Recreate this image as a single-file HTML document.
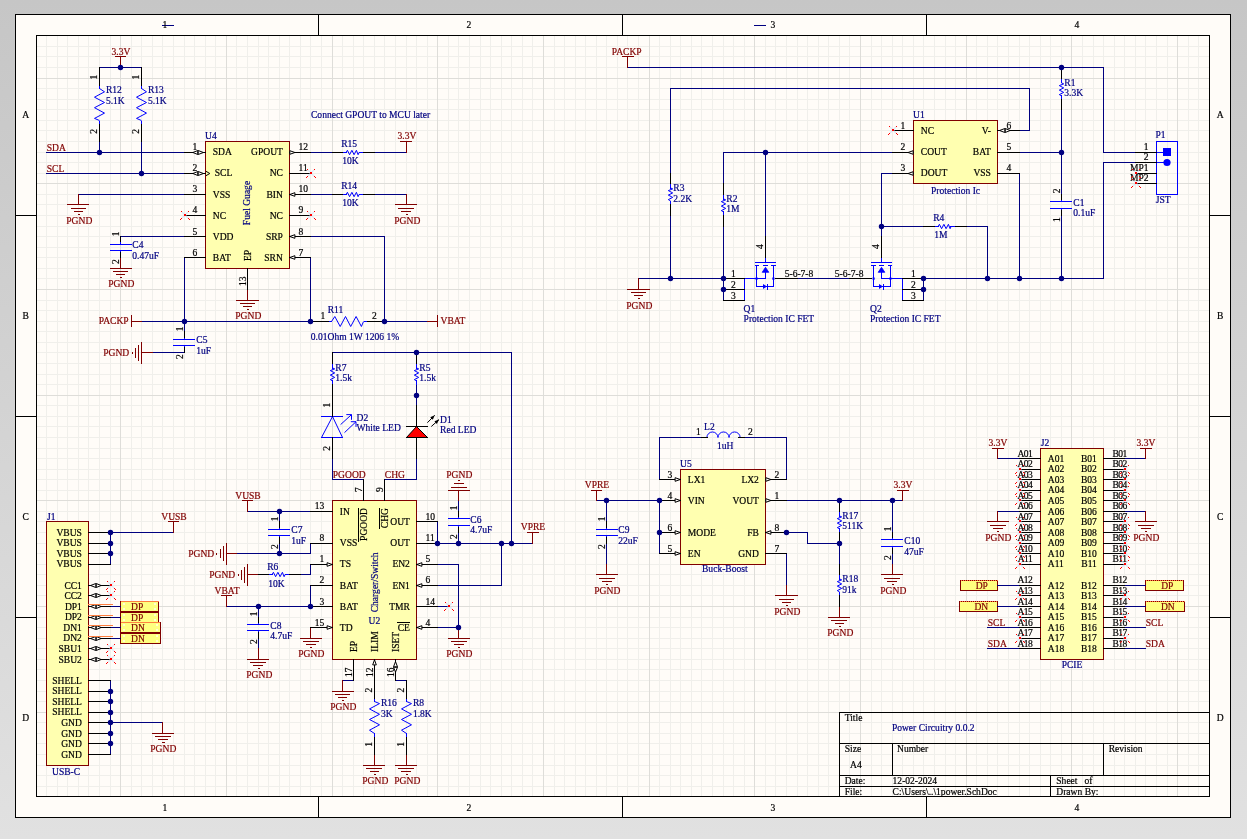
<!DOCTYPE html><html><head><meta charset="utf-8"><title>Power Circuitry 0.0.2</title><style>html,body{margin:0;padding:0;background:#d3d3d3;overflow:hidden}body{width:1247px;height:839px}svg{display:block;will-change:transform}text{font-family:"Liberation Serif",serif;font-size:9.56px;stroke-width:0.2px;paint-order:stroke}</style></head><body>
<svg width="1247" height="839" viewBox="0 0 1247 839">
<defs><linearGradient id="bg" x1="0" y1="0" x2="0" y2="1"><stop offset="0" stop-color="#C6C6C6"/><stop offset="1" stop-color="#E1E1E1"/></linearGradient></defs>
<rect width="1247" height="839" fill="url(#bg)"/>
<rect x="15" y="14" width="1216" height="804" fill="#FFFCF8"/>
<g shape-rendering="crispEdges" fill="none" stroke-width="1"><path stroke="#F0EFEB" d="M46.5 36V796M57.5 36V796M67.5 36V796M78.5 36V796M88.5 36V796M99.5 36V796M110.5 36V796M131.5 36V796M141.5 36V796M152.5 36V796M162.5 36V796M173.5 36V796M184.5 36V796M194.5 36V796M205.5 36V796M215.5 36V796M236.5 36V796M247.5 36V796M258.5 36V796M268.5 36V796M279.5 36V796M289.5 36V796M300.5 36V796M310.5 36V796M321.5 36V796M342.5 36V796M353.5 36V796M363.5 36V796M374.5 36V796M384.5 36V796M395.5 36V796M406.5 36V796M416.5 36V796M427.5 36V796M448.5 36V796M458.5 36V796M469.5 36V796M480.5 36V796M490.5 36V796M501.5 36V796M511.5 36V796M522.5 36V796M532.5 36V796M554.5 36V796M564.5 36V796M575.5 36V796M585.5 36V796M596.5 36V796M606.5 36V796M617.5 36V796M627.5 36V796M638.5 36V796M659.5 36V796M670.5 36V796M680.5 36V796M691.5 36V796M701.5 36V796M712.5 36V796M723.5 36V796M733.5 36V796M744.5 36V796M765.5 36V796M775.5 36V796M786.5 36V796M797.5 36V796M807.5 36V796M818.5 36V796M828.5 36V796M839.5 36V796M849.5 36V796M871.5 36V796M881.5 36V796M892.5 36V796M902.5 36V796M913.5 36V796M923.5 36V796M934.5 36V796M945.5 36V796M955.5 36V796M976.5 36V796M987.5 36V796M997.5 36V796M1008.5 36V796M1019.5 36V796M1029.5 36V796M1040.5 36V796M1050.5 36V796M1061.5 36V796M1082.5 36V796M1093.5 36V796M1103.5 36V796M1114.5 36V796M1124.5 36V796M1135.5 36V796M1145.5 36V796M1156.5 36V796M1167.5 36V796M1188.5 36V796M1198.5 36V796M37 46.5H1209M37 56.5H1209M37 67.5H1209M37 88.5H1209M37 99.5H1209M37 109.5H1209M37 120.5H1209M37 130.5H1209M37 141.5H1209M37 152.5H1209M37 162.5H1209M37 173.5H1209M37 194.5H1209M37 204.5H1209M37 215.5H1209M37 226.5H1209M37 236.5H1209M37 247.5H1209M37 257.5H1209M37 268.5H1209M37 278.5H1209M37 300.5H1209M37 310.5H1209M37 321.5H1209M37 331.5H1209M37 342.5H1209M37 352.5H1209M37 363.5H1209M37 374.5H1209M37 384.5H1209M37 405.5H1209M37 416.5H1209M37 426.5H1209M37 437.5H1209M37 448.5H1209M37 458.5H1209M37 469.5H1209M37 479.5H1209M37 490.5H1209M37 511.5H1209M37 521.5H1209M37 532.5H1209M37 543.5H1209M37 553.5H1209M37 564.5H1209M37 574.5H1209M37 585.5H1209M37 595.5H1209M37 617.5H1209M37 627.5H1209M37 638.5H1209M37 648.5H1209M37 659.5H1209M37 669.5H1209M37 680.5H1209M37 691.5H1209M37 701.5H1209M37 722.5H1209M37 733.5H1209M37 743.5H1209M37 754.5H1209M37 765.5H1209M37 775.5H1209M37 786.5H1209"/><path stroke="#DEDDD9" d="M120.5 36V796M226.5 36V796M332.5 36V796M437.5 36V796M543.5 36V796M649.5 36V796M754.5 36V796M860.5 36V796M966.5 36V796M1071.5 36V796M1177.5 36V796M37 78.5H1209M37 183.5H1209M37 289.5H1209M37 395.5H1209M37 500.5H1209M37 606.5H1209M37 712.5H1209"/></g>
<path shape-rendering="crispEdges" fill="none" stroke="#000" stroke-width="1" d="M15.5 14.5H1230.5V817.5H15.5ZM36.5 35.5H1209.5V796.5H36.5ZM318.5 14.5V35.5M318.5 796.5V817.5M622.5 14.5V35.5M622.5 796.5V817.5M926.5 14.5V35.5M926.5 796.5V817.5M15.5 215.5H36.5M1209.5 215.5H1230.5M15.5 416.5H36.5M1209.5 416.5H1230.5M15.5 617.5H36.5M1209.5 617.5H1230.5M839.5 796.5V712.5H1209.5M839.5 743.5H1209.5M839.5 775.5H1209.5M839.5 786.5H1209.5M892.5 743.5V775.5M1103.5 743.5V775.5M1050.5 775.5V796.5"/>
<g fill="#FFFFB0" stroke="#800000" stroke-width="1" shape-rendering="crispEdges"><rect x="205.5" y="141.5" width="84" height="127"/><rect x="332.5" y="500.5" width="84" height="159"/><rect x="46.5" y="521.5" width="42" height="244"/><rect x="913.5" y="120.5" width="84" height="63"/><rect x="680.5" y="469.5" width="85" height="95"/><rect x="1040.5" y="448.5" width="63" height="211"/></g>
<g fill="#FFFF80" stroke="#800000" stroke-width="1" shape-rendering="crispEdges"><rect x="120.5" y="601.5" width="38" height="10"/><rect x="120.5" y="612.5" width="38" height="10"/><rect x="120.5" y="622.5" width="39.5" height="10"/><rect x="120.5" y="633.5" width="39.5" height="10"/><rect x="960.5" y="580.5" width="37" height="10"/><rect x="959.5" y="601.5" width="38" height="10"/><rect x="1145.5" y="580.5" width="38" height="10"/><rect x="1145.5" y="601.5" width="39" height="10"/></g>
<g fill="none" stroke="#FFFFD0" stroke-width="1.5" shape-rendering="crispEdges"><path d="M123 604h2M123 609h2M154 604h2M154 609h2"/><path d="M123 615h2M123 620h2M154 615h2M154 620h2"/><path d="M123 625h2M123 630h2M155.5 625h2M155.5 630h2"/><path d="M123 636h2M123 641h2M155.5 636h2M155.5 641h2"/></g>
<g fill="none" stroke="#0000FF" stroke-width="1" shape-rendering="crispEdges"><rect x="1156.5" y="141.5" width="21" height="53"/></g>
<path shape-rendering="crispEdges" stroke-linecap="square" fill="none" stroke="#000080" stroke-width="1" d="M99.5 67.5 L141.5 67.5M99.5 141.5 L99.5 152.5M141.5 141.5 L141.5 173.5M46.5 152.5 L184.5 152.5M46.5 173.5 L184.5 173.5M78.5 194.5 L184.5 194.5M120.5 236.5 L184.5 236.5M184.5 257.5 L184.5 321.5M141.5 321.5 L310.5 321.5M310.5 257.5 L310.5 321.5M310.5 236.5 L384.5 236.5 L384.5 321.5M384.5 321.5 L427.5 321.5M184.5 321.5 L184.5 331.5M184.5 352.5 L152.5 352.5M310.5 152.5 L332.5 152.5M374.5 152.5 L406.5 152.5M310.5 194.5 L332.5 194.5M374.5 194.5 L406.5 194.5M332.5 352.5 L511.5 352.5 L511.5 543.5M416.5 395.5 L416.5 384.5M416.5 395.5 L416.5 405.5M332.5 458.5 L332.5 479.5 L363.5 479.5M416.5 458.5 L416.5 479.5 L384.5 479.5M247.5 511.5 L310.5 511.5M279.5 511.5 L279.5 521.5M279.5 543.5 L279.5 553.5M236.5 553.5 L310.5 553.5 L310.5 543.5M310.5 564.5 L310.5 574.5 L300.5 574.5M310.5 585.5 L310.5 606.5M226.5 606.5 L310.5 606.5M258.5 606.5 L258.5 617.5M258.5 638.5 L258.5 648.5M437.5 521.5 L437.5 543.5M437.5 543.5 L532.5 543.5M458.5 500.5 L458.5 511.5M458.5 532.5 L458.5 543.5M437.5 564.5 L458.5 564.5 L458.5 627.5M437.5 585.5 L501.5 585.5 L501.5 543.5M437.5 606.5 L448.5 606.5M437.5 627.5 L458.5 627.5M353.5 680.5 L342.5 680.5M395.5 680.5 L406.5 680.5M110.5 532.5 L110.5 564.5M110.5 532.5 L173.5 532.5M110.5 606.5 L120.5 606.5M110.5 617.5 L120.5 617.5M110.5 627.5 L120.5 627.5M110.5 638.5 L120.5 638.5M110.5 680.5 L110.5 754.5M110.5 722.5 L162.5 722.5M627.5 67.5 L1103.5 67.5 L1103.5 152.5 L1135.5 152.5M1061.5 109.5 L1061.5 194.5M1061.5 215.5 L1061.5 278.5M723.5 152.5 L892.5 152.5M765.5 152.5 L765.5 236.5M892.5 173.5 L881.5 173.5 L881.5 236.5M881.5 226.5 L923.5 226.5M966.5 226.5 L987.5 226.5 L987.5 278.5M1019.5 130.5 L1029.5 130.5 L1029.5 88.5 L670.5 88.5 L670.5 173.5M670.5 215.5 L670.5 278.5M723.5 152.5 L723.5 183.5M723.5 226.5 L723.5 300.5M1019.5 152.5 L1061.5 152.5M1019.5 173.5 L1019.5 278.5M638.5 278.5 L723.5 278.5M923.5 278.5 L1103.5 278.5 L1103.5 162.5 L1135.5 162.5M923.5 278.5 L923.5 300.5M797.5 278.5 L849.5 278.5M659.5 479.5 L659.5 437.5 L701.5 437.5M744.5 437.5 L786.5 437.5 L786.5 479.5M596.5 500.5 L659.5 500.5M659.5 500.5 L659.5 553.5M606.5 500.5 L606.5 521.5M606.5 543.5 L606.5 564.5M786.5 500.5 L902.5 500.5M839.5 543.5 L839.5 564.5M786.5 532.5 L807.5 532.5 L807.5 543.5 L839.5 543.5M786.5 553.5 L786.5 585.5M892.5 500.5 L892.5 532.5M892.5 553.5 L892.5 564.5M997.5 458.5 L1019.5 458.5M1124.5 458.5 L1145.5 458.5M997.5 511.5 L1019.5 511.5M1124.5 511.5 L1145.5 511.5M997.5 585.5 L1019.5 585.5M997.5 606.5 L1019.5 606.5M1124.5 585.5 L1145.5 585.5M1124.5 606.5 L1145.5 606.5M987.5 627.5 L1019.5 627.5M987.5 648.5 L1019.5 648.5M1124.5 627.5 L1145.5 627.5M1124.5 648.5 L1145.5 648.5M162.5 25.5 L173.5 25.5M754.5 25.5 L765.5 25.5"/>
<path shape-rendering="crispEdges" stroke-linecap="square" fill="none" stroke="#0000FF" stroke-width="1" d="M99.5 85.5 L99.5 88.5M99.5 121 L99.5 123.5M141.5 85.5 L141.5 88.5M141.5 121 L141.5 123.5M120.5 242.5 L120.5 244.5M120.5 250.5 L120.5 251.5M110.5 244.5 L131.5 244.5M110.5 250.5 L131.5 250.5M328.5 321.5 L331.5 321.5M364 321.5 L366.5 321.5M184.5 338.5 L184.5 339.5M184.5 345.5 L184.5 346.5M173.5 339.5 L194.5 339.5M173.5 345.5 L194.5 345.5M342.5 152.5 L346.5 152.5M359.5 152.5 L363.5 152.5M342.5 194.5 L346.5 194.5M359.5 194.5 L363.5 194.5M332.5 384.5 L332.5 380.5M332.5 368.5 L332.5 363.5M416.5 384.5 L416.5 380.5M416.5 368.5 L416.5 363.5M321.5 416.5 L342.5 416.5M321.5 437.5 L342.5 437.5M279.5 528.5 L279.5 529.5M279.5 535.5 L279.5 536.5M268.5 529.5 L289.5 529.5M268.5 535.5 L289.5 535.5M268.5 574.5 L272.5 574.5M285.5 574.5 L289.5 574.5M258.5 623.5 L258.5 624.5M258.5 630.5 L258.5 631.5M247.5 624.5 L268.5 624.5M247.5 630.5 L268.5 630.5M458.5 517.5 L458.5 518.5M458.5 525.5 L458.5 526.5M448.5 518.5 L469.5 518.5M448.5 525.5 L469.5 525.5M374.5 736.5 L374.5 733.5M374.5 701 L374.5 698.5M406.5 736.5 L406.5 733.5M406.5 701 L406.5 698.5M1061.5 99.5 L1061.5 95.5M1061.5 82.5 L1061.5 78.5M1061.5 200.5 L1061.5 201.5M1061.5 208.5 L1061.5 209.5M1050.5 201.5 L1071.5 201.5M1050.5 208.5 L1071.5 208.5M934.5 226.5 L938.5 226.5M950.5 226.5 L955.5 226.5M670.5 204.5 L670.5 201.5M670.5 188.5 L670.5 183.5M723.5 215.5 L723.5 211.5M723.5 199.5 L723.5 194.5M744.5 278.5 L744.5 300.5M765.5 257.5 L765.5 262.5M755.5 262.5 L775.5 262.5M755.5 265.5 L758.5 265.5M763.5 265.5 L767.5 265.5M771.5 265.5 L775.5 265.5M756.5 265.5 L756.5 286.5 L773.5 286.5 L773.5 265.5M744.5 278.5 L765.5 278.5 L765.5 269.5M767.5 284 L767.5 289M902.5 278.5 L902.5 300.5M881.5 257.5 L881.5 262.5M871.5 262.5 L891.5 262.5M871.5 265.5 L875.5 265.5M879.5 265.5 L883.5 265.5M888.5 265.5 L891.5 265.5M873.5 265.5 L873.5 286.5 L890.5 286.5 L890.5 265.5M902.5 278.5 L881.5 278.5 L881.5 269.5M883.5 284 L883.5 289M1156.5 152.5 L1164.5 152.5M1156.5 162.5 L1164.5 162.5M606.5 528.5 L606.5 529.5M606.5 535.5 L606.5 536.5M596.5 529.5 L617.5 529.5M596.5 535.5 L617.5 535.5M839.5 532.5 L839.5 528.5M839.5 516.5 L839.5 511.5M839.5 595.5 L839.5 592.5M839.5 579.5 L839.5 574.5M892.5 538.5 L892.5 539.5M892.5 546.5 L892.5 547.5M881.5 539.5 L902.5 539.5M881.5 546.5 L902.5 546.5"/>
<path fill="none" stroke="#0000FF" stroke-width="1" d="M99.5 88.5 L104.5 91.8 L94.5 97.2 L104.5 102.5 L94.5 107.7 L104.5 113.1 L94.5 118.4 L99.5 120.5M141.5 88.5 L146.5 91.8 L136.5 97.2 L146.5 102.5 L136.5 107.7 L146.5 113.1 L136.5 118.4 L141.5 120.5M331.5 321.5 L334.8 316.5 L340.2 326.5 L345.5 316.5 L350.7 326.5 L356.1 316.5 L361.4 326.5 L363.5 321.5M346.1 152.5 L347.4 150.3 L349.6 154.7 L351.9 150.3 L354.1 154.7 L356.4 150.3 L358.1 154.7 L359.1 152.5M346.1 194.5 L347.4 192.3 L349.6 196.7 L351.9 192.3 L354.1 196.7 L356.4 192.3 L358.1 196.7 L359.1 194.5M332.5 380.9 L330.3 379.6 L334.7 377.4 L330.3 375.1 L334.7 372.9 L330.3 370.6 L334.7 368.9 L332.5 367.9M416.5 380.9 L414.3 379.6 L418.7 377.4 L414.3 375.1 L418.7 372.9 L414.3 370.6 L418.7 368.9 L416.5 367.9M332.5 416.5 L342.5 437.5 L321.5 437.5 L332.5 416.5M340.6 424.6 L351.5 414.6M346.3 414.6 L351.5 414.6 L351.5 419.8M344.5 432.6 L356 421.7M350.8 421.7 L356 421.7 L356 426.9M272.1 574.5 L273.4 572.3 L275.6 576.7 L277.9 572.3 L280.1 576.7 L282.4 572.3 L284.1 576.7 L285.1 574.5M374.5 733.5 L369.5 730.2 L379.5 724.8 L369.5 719.5 L379.5 714.3 L369.5 708.9 L379.5 703.6 L374.5 701.5M406.5 733.5 L401.5 730.2 L411.5 724.8 L401.5 719.5 L411.5 714.3 L401.5 708.9 L411.5 703.6 L406.5 701.5M1061.5 95.9 L1059.3 94.6 L1063.7 92.4 L1059.3 90.1 L1063.7 87.9 L1059.3 85.6 L1063.7 83.9 L1061.5 82.9M938.1 226.5 L939.4 224.3 L941.6 228.7 L943.9 224.3 L946.1 228.7 L948.4 224.3 L950.1 228.7 L951.1 226.5M670.5 200.9 L668.3 199.6 L672.7 197.4 L668.3 195.1 L672.7 192.9 L668.3 190.6 L672.7 188.9 L670.5 187.9M723.5 211.9 L721.3 210.6 L725.7 208.4 L721.3 206.1 L725.7 203.9 L721.3 201.6 L725.7 199.9 L723.5 198.9M706.9 437.5 a5.53 5.53 0 0 1 11.07 0 a5.53 5.53 0 0 1 11.07 0 a5.53 5.53 0 0 1 11.07 0M839.5 528.9 L837.3 527.6 L841.7 525.4 L837.3 523.1 L841.7 520.9 L837.3 518.6 L841.7 516.9 L839.5 515.9M839.5 591.9 L837.3 590.6 L841.7 588.4 L837.3 586.1 L841.7 583.9 L837.3 581.6 L841.7 579.9 L839.5 578.9"/>
<path fill="none" stroke="#000000" stroke-width="1" d="M427.4 422.7 L434.7 415.3M431.3 426.5 L439 419.6"/>
<g fill="#FF0000" stroke="#000" stroke-width="1"><polygon points="416.5,426.5 427.5,437.5 406.5,437.5"/></g>
<g fill="#000"><polygon points="434.7,415.3 432.82,419.77 430.26,417.24"/><polygon points="439,419.6 436.85,423.94 434.45,421.26"/></g>
<g fill="#0000FF"><polygon points="765.5,267.3 768.8,272.3 762.2,272.3" stroke="#0000FF" stroke-width="0.8"/><rect x="755.5" y="277.5" width="2.2" height="2.2"/><rect x="772.3" y="277.5" width="2.2" height="2.2"/><polygon points="763,284 767,286.5 763,289" /><polygon points="881.5,267.3 884.8,272.3 878.2,272.3" stroke="#0000FF" stroke-width="0.8"/><rect x="872.5" y="277.5" width="2.2" height="2.2"/><rect x="889.3" y="277.5" width="2.2" height="2.2"/><polygon points="879,284 883,286.5 879,289" /><rect x="1163" y="148" width="8" height="8" shape-rendering="crispEdges"/><circle cx="1167" cy="162.5" r="3.6"/></g>
<path shape-rendering="crispEdges" stroke-linecap="square" fill="none" stroke="#800000" stroke-width="1" d="M120.5 67.5 L120.5 56.5M115.5 56.5 L125.5 56.5M247.5 289.5 L247.5 300.5M236.5 300.5 L258.5 300.5M240.5 303.5 L254.5 303.5M243.5 306.5 L251.5 306.5M247.5 309.5 L248.5 309.5M78.5 194.5 L78.5 204.5M67.5 204.5 L88.5 204.5M71.5 208.5 L85.5 208.5M74.5 211.5 L82.5 211.5M78.5 214.5 L79.5 214.5M120.5 257.5 L120.5 268.5M110.5 268.5 L131.5 268.5M113.5 271.5 L127.5 271.5M116.5 274.5 L124.5 274.5M120.5 277.5 L121.5 277.5M141.5 321.5 L131.5 321.5M131.5 315.5 L131.5 326.5M427.5 321.5 L437.5 321.5M437.5 315.5 L437.5 326.5M152.5 352.5 L141.5 352.5M141.5 342.5 L141.5 363.5M138.5 345.5 L138.5 360.5M135.5 348.5 L135.5 357.5M132.5 352.5 L132.5 353.5M406.5 152.5 L406.5 141.5M400.5 141.5 L411.5 141.5M406.5 194.5 L406.5 204.5M395.5 204.5 L416.5 204.5M398.5 208.5 L413.5 208.5M401.5 211.5 L410.5 211.5M406.5 214.5 L407.5 214.5M247.5 511.5 L247.5 500.5M242.5 500.5 L252.5 500.5M236.5 553.5 L226.5 553.5M226.5 543.5 L226.5 564.5M223.5 546.5 L223.5 560.5M220.5 549.5 L220.5 557.5M216.5 553.5 L216.5 554.5M258.5 574.5 L247.5 574.5M247.5 564.5 L247.5 585.5M244.5 567.5 L244.5 582.5M241.5 570.5 L241.5 579.5M238.5 574.5 L238.5 575.5M226.5 606.5 L226.5 595.5M221.5 595.5 L231.5 595.5M258.5 648.5 L258.5 659.5M247.5 659.5 L268.5 659.5M250.5 662.5 L265.5 662.5M253.5 665.5 L262.5 665.5M258.5 668.5 L259.5 668.5M310.5 627.5 L310.5 638.5M300.5 638.5 L321.5 638.5M303.5 641.5 L318.5 641.5M306.5 644.5 L315.5 644.5M310.5 647.5 L311.5 647.5M532.5 543.5 L532.5 532.5M527.5 532.5 L538.5 532.5M458.5 500.5 L458.5 490.5M448.5 490.5 L469.5 490.5M451.5 487.5 L466.5 487.5M454.5 483.5 L463.5 483.5M458.5 480.5 L459.5 480.5M458.5 627.5 L458.5 638.5M448.5 638.5 L469.5 638.5M451.5 641.5 L466.5 641.5M454.5 644.5 L463.5 644.5M458.5 647.5 L459.5 647.5M342.5 680.5 L342.5 691.5M332.5 691.5 L353.5 691.5M335.5 694.5 L349.5 694.5M338.5 697.5 L346.5 697.5M342.5 700.5 L343.5 700.5M374.5 754.5 L374.5 765.5M363.5 765.5 L384.5 765.5M366.5 768.5 L381.5 768.5M370.5 771.5 L378.5 771.5M374.5 774.5 L375.5 774.5M406.5 754.5 L406.5 765.5M395.5 765.5 L416.5 765.5M398.5 768.5 L413.5 768.5M401.5 771.5 L410.5 771.5M406.5 774.5 L407.5 774.5M173.5 532.5 L173.5 521.5M168.5 521.5 L178.5 521.5M162.5 722.5 L162.5 733.5M152.5 733.5 L173.5 733.5M155.5 736.5 L170.5 736.5M158.5 739.5 L167.5 739.5M162.5 742.5 L164.5 742.5M627.5 67.5 L627.5 56.5M622.5 56.5 L633.5 56.5M638.5 278.5 L638.5 289.5M627.5 289.5 L649.5 289.5M631.5 292.5 L645.5 292.5M634.5 295.5 L642.5 295.5M638.5 298.5 L639.5 298.5M596.5 500.5 L596.5 490.5M591.5 490.5 L601.5 490.5M606.5 564.5 L606.5 574.5M596.5 574.5 L617.5 574.5M599.5 578.5 L614.5 578.5M602.5 581.5 L611.5 581.5M606.5 584.5 L607.5 584.5M902.5 500.5 L902.5 490.5M897.5 490.5 L908.5 490.5M839.5 606.5 L839.5 617.5M828.5 617.5 L849.5 617.5M831.5 620.5 L846.5 620.5M835.5 623.5 L843.5 623.5M839.5 626.5 L840.5 626.5M786.5 585.5 L786.5 595.5M775.5 595.5 L797.5 595.5M779.5 599.5 L793.5 599.5M782.5 602.5 L790.5 602.5M786.5 605.5 L787.5 605.5M892.5 564.5 L892.5 574.5M881.5 574.5 L902.5 574.5M884.5 578.5 L899.5 578.5M887.5 581.5 L896.5 581.5M892.5 584.5 L893.5 584.5M997.5 458.5 L997.5 448.5M992.5 448.5 L1003.5 448.5M1145.5 458.5 L1145.5 448.5M1140.5 448.5 L1151.5 448.5M997.5 511.5 L997.5 521.5M987.5 521.5 L1008.5 521.5M990.5 525.5 L1005.5 525.5M993.5 528.5 L1002.5 528.5M997.5 531.5 L998.5 531.5M1145.5 511.5 L1145.5 521.5M1135.5 521.5 L1156.5 521.5M1138.5 525.5 L1153.5 525.5M1141.5 528.5 L1150.5 528.5M1145.5 531.5 L1146.5 531.5"/>
<path shape-rendering="crispEdges" stroke-linecap="square" fill="none" stroke="#000000" stroke-width="1" d="M99.5 67.5 L99.5 85M99.5 124 L99.5 141.5M141.5 67.5 L141.5 85M141.5 124 L141.5 141.5M184.5 152.5 L205.5 152.5M184.5 173.5 L205.5 173.5M184.5 194.5 L205.5 194.5M184.5 215.5 L205.5 215.5M184.5 236.5 L205.5 236.5M184.5 257.5 L205.5 257.5M289.5 152.5 L310.5 152.5M289.5 173.5 L310.5 173.5M289.5 194.5 L310.5 194.5M289.5 215.5 L310.5 215.5M289.5 236.5 L310.5 236.5M289.5 257.5 L310.5 257.5M247.5 268.5 L247.5 289.5M120.5 236.5 L120.5 241.5M120.5 252.5 L120.5 257.5M310.5 321.5 L328 321.5M367 321.5 L384.5 321.5M184.5 331.5 L184.5 337.5M184.5 347.5 L184.5 352.5M332.5 152.5 L342.5 152.5M363.5 152.5 L374.5 152.5M332.5 194.5 L342.5 194.5M363.5 194.5 L374.5 194.5M332.5 395.5 L332.5 384.5M332.5 363.5 L332.5 352.5M416.5 363.5 L416.5 352.5M332.5 395.5 L332.5 416.5M332.5 437.5 L332.5 458.5M416.5 405.5 L416.5 426.5M416.5 437.5 L416.5 458.5M406.5 426.5 L427.5 426.5M406.5 437.5 L427.5 437.5M310.5 511.5 L332.5 511.5M310.5 543.5 L332.5 543.5M310.5 564.5 L332.5 564.5M310.5 585.5 L332.5 585.5M310.5 606.5 L332.5 606.5M310.5 627.5 L332.5 627.5M416.5 521.5 L437.5 521.5M416.5 543.5 L437.5 543.5M416.5 564.5 L437.5 564.5M416.5 585.5 L437.5 585.5M416.5 606.5 L437.5 606.5M416.5 627.5 L437.5 627.5M363.5 479.5 L363.5 500.5M384.5 479.5 L384.5 500.5M353.5 659.5 L353.5 680.5M374.5 659.5 L374.5 680.5M395.5 659.5 L395.5 680.5M358.7 508 L358.7 541M379.7 508 L379.7 528M397 622.2 L409.5 622.2M279.5 521.5 L279.5 527.5M279.5 537.5 L279.5 543.5M258.5 574.5 L268.5 574.5M289.5 574.5 L300.5 574.5M258.5 617.5 L258.5 622.5M258.5 632.5 L258.5 638.5M458.5 511.5 L458.5 516.5M458.5 527.5 L458.5 532.5M374.5 754.5 L374.5 737M374.5 698 L374.5 680.5M406.5 754.5 L406.5 737M406.5 698 L406.5 680.5M88.5 532.5 L110.5 532.5M88.5 543.5 L110.5 543.5M88.5 553.5 L110.5 553.5M88.5 564.5 L110.5 564.5M88.5 585.5 L110.5 585.5M88.5 595.5 L110.5 595.5M88.5 606.5 L110.5 606.5M88.5 617.5 L110.5 617.5M88.5 627.5 L110.5 627.5M88.5 638.5 L110.5 638.5M88.5 648.5 L110.5 648.5M88.5 659.5 L110.5 659.5M88.5 680.5 L110.5 680.5M88.5 691.5 L110.5 691.5M88.5 701.5 L110.5 701.5M88.5 712.5 L110.5 712.5M88.5 722.5 L110.5 722.5M88.5 733.5 L110.5 733.5M88.5 743.5 L110.5 743.5M88.5 754.5 L110.5 754.5M1061.5 109.5 L1061.5 99.5M1061.5 78.5 L1061.5 67.5M1061.5 194.5 L1061.5 199.5M1061.5 210.5 L1061.5 215.5M892.5 130.5 L913.5 130.5M892.5 152.5 L913.5 152.5M892.5 173.5 L913.5 173.5M997.5 130.5 L1019.5 130.5M997.5 152.5 L1019.5 152.5M997.5 173.5 L1019.5 173.5M923.5 226.5 L934.5 226.5M955.5 226.5 L966.5 226.5M670.5 215.5 L670.5 204.5M670.5 183.5 L670.5 173.5M723.5 226.5 L723.5 215.5M723.5 194.5 L723.5 183.5M723.5 278.5 L744.5 278.5M723.5 289.5 L744.5 289.5M723.5 300.5 L744.5 300.5M765.5 236.5 L765.5 257.5M775.5 278.5 L797.5 278.5M923.5 278.5 L902.5 278.5M923.5 289.5 L902.5 289.5M923.5 300.5 L902.5 300.5M881.5 236.5 L881.5 257.5M871.5 278.5 L849.5 278.5M1135.5 152.5 L1156.5 152.5M1135.5 162.5 L1156.5 162.5M1135.5 173.5 L1156.5 173.5M1135.5 183.5 L1156.5 183.5M659.5 479.5 L680.5 479.5M659.5 500.5 L680.5 500.5M659.5 532.5 L680.5 532.5M659.5 553.5 L680.5 553.5M765.5 479.5 L786.5 479.5M765.5 500.5 L786.5 500.5M765.5 532.5 L786.5 532.5M765.5 553.5 L786.5 553.5M701.5 437.5 L707.5 437.5M738.5 437.5 L744.5 437.5M606.5 521.5 L606.5 527.5M606.5 537.5 L606.5 543.5M839.5 543.5 L839.5 532.5M839.5 511.5 L839.5 500.5M839.5 606.5 L839.5 595.5M839.5 574.5 L839.5 564.5M892.5 532.5 L892.5 537.5M892.5 548.5 L892.5 553.5M1019.5 458.5 L1040.5 458.5M1019.5 469.5 L1040.5 469.5M1019.5 479.5 L1040.5 479.5M1019.5 490.5 L1040.5 490.5M1019.5 500.5 L1040.5 500.5M1019.5 511.5 L1040.5 511.5M1019.5 521.5 L1040.5 521.5M1019.5 532.5 L1040.5 532.5M1019.5 543.5 L1040.5 543.5M1019.5 553.5 L1040.5 553.5M1019.5 564.5 L1040.5 564.5M1019.5 585.5 L1040.5 585.5M1019.5 595.5 L1040.5 595.5M1019.5 606.5 L1040.5 606.5M1019.5 617.5 L1040.5 617.5M1019.5 627.5 L1040.5 627.5M1019.5 638.5 L1040.5 638.5M1019.5 648.5 L1040.5 648.5M1103.5 458.5 L1124.5 458.5M1103.5 469.5 L1124.5 469.5M1103.5 479.5 L1124.5 479.5M1103.5 490.5 L1124.5 490.5M1103.5 500.5 L1124.5 500.5M1103.5 511.5 L1124.5 511.5M1103.5 521.5 L1124.5 521.5M1103.5 532.5 L1124.5 532.5M1103.5 543.5 L1124.5 543.5M1103.5 553.5 L1124.5 553.5M1103.5 564.5 L1124.5 564.5M1103.5 585.5 L1124.5 585.5M1103.5 595.5 L1124.5 595.5M1103.5 606.5 L1124.5 606.5M1103.5 617.5 L1124.5 617.5M1103.5 627.5 L1124.5 627.5M1103.5 638.5 L1124.5 638.5M1103.5 648.5 L1124.5 648.5"/>
<g fill="#FFFCF8" stroke="#000" stroke-width="1"><polygon points="192.9,152.5 197.8,150.5 197.8,154.5"/><polygon points="203.4,152.5 198.2,150.5 198.2,154.5"/><polygon points="192.9,173.5 197.8,171.5 197.8,175.5"/><polygon points="203.4,173.5 198.2,171.5 198.2,175.5"/><polygon points="294.9,152.5 289.8,154.3 289.8,150.7"/><polygon points="289.8,194.5 294.9,196.3 294.9,192.7"/><polygon points="289.8,236.5 294.9,238.3 294.9,234.7"/><polygon points="289.8,257.5 294.9,259.3 294.9,255.7"/><polygon points="332.2,564.5 327.1,562.7 327.1,566.3"/><polygon points="332.2,627.5 327.1,625.7 327.1,629.3"/><polygon points="416.8,564.5 421.9,566.3 421.9,562.7"/><polygon points="416.8,585.5 421.9,587.3 421.9,583.7"/><polygon points="416.8,627.5 421.9,629.3 421.9,625.7"/><polygon points="374.5,659.8 372.7,664.9 376.3,664.9"/><polygon points="395.5,672.1 393.5,667.2 397.5,667.2"/><polygon points="395.5,661.6 393.5,666.8 397.5,666.8"/><polygon points="101.1,585.5 96.2,587.5 96.2,583.5"/><polygon points="90.6,585.5 95.8,587.5 95.8,583.5"/><polygon points="101.1,595.5 96.2,597.5 96.2,593.5"/><polygon points="90.6,595.5 95.8,597.5 95.8,593.5"/><polygon points="101.1,606.5 96.2,608.5 96.2,604.5"/><polygon points="90.6,606.5 95.8,608.5 95.8,604.5"/><polygon points="101.1,617.5 96.2,619.5 96.2,615.5"/><polygon points="90.6,617.5 95.8,619.5 95.8,615.5"/><polygon points="101.1,627.5 96.2,629.5 96.2,625.5"/><polygon points="90.6,627.5 95.8,629.5 95.8,625.5"/><polygon points="101.1,638.5 96.2,640.5 96.2,636.5"/><polygon points="90.6,638.5 95.8,640.5 95.8,636.5"/><polygon points="101.1,648.5 96.2,650.5 96.2,646.5"/><polygon points="90.6,648.5 95.8,650.5 95.8,646.5"/><polygon points="101.1,659.5 96.2,661.5 96.2,657.5"/><polygon points="90.6,659.5 95.8,661.5 95.8,657.5"/><polygon points="908.1,152.5 913.2,150.7 913.2,154.3"/><polygon points="908.1,173.5 913.2,171.7 913.2,175.3"/><polygon points="1010.1,130.5 1005.2,132.5 1005.2,128.5"/><polygon points="999.6,130.5 1004.8,132.5 1004.8,128.5"/><polygon points="680.2,479.5 675.1,477.7 675.1,481.3"/><polygon points="680.2,500.5 675.1,498.7 675.1,502.3"/><polygon points="680.2,532.5 675.1,530.7 675.1,534.3"/><polygon points="680.2,553.5 675.1,551.7 675.1,555.3"/><polygon points="770.9,479.5 765.8,481.3 765.8,477.7"/><polygon points="770.9,500.5 765.8,502.3 765.8,498.7"/><polygon points="765.8,532.5 770.9,534.3 770.9,530.7"/></g>
<g fill="none" stroke="#000" stroke-width="1"><path d="M206 171.3l3.8 2.2l-3.8 2.2"/></g>
<g fill="none" stroke="#FF8040" stroke-width="1" shape-rendering="crispEdges"><path d="M120.5 601.2H158.5"/><path d="M87.5 604H112.5"/><path d="M87.5 615H112.5"/><path d="M120.5 622.2H160"/><path d="M87.5 625H112.5"/><path d="M87.5 636H112.5"/><path d="M960.5 580.2H997.5" stroke-dasharray="1 1"/><path d="M959.5 601.2H997.5" stroke-dasharray="1 1"/><path d="M1145.5 580.2H1183.5" stroke-dasharray="1 1"/><path d="M1145.5 601.2H1184.5" stroke-dasharray="1 1"/></g>
<g fill="#000080"><circle cx="120.5" cy="67.5" r="2.7"/><circle cx="99.5" cy="152.5" r="2.7"/><circle cx="141.5" cy="173.5" r="2.7"/><circle cx="184.5" cy="321.5" r="2.7"/><circle cx="310.5" cy="321.5" r="2.7"/><circle cx="384.5" cy="321.5" r="2.7"/><circle cx="416.5" cy="352.5" r="2.7"/><circle cx="416.5" cy="395.5" r="2.7"/><circle cx="279.5" cy="511.5" r="2.7"/><circle cx="279.5" cy="553.5" r="2.7"/><circle cx="310.5" cy="606.5" r="2.7"/><circle cx="258.5" cy="606.5" r="2.7"/><circle cx="437.5" cy="543.5" r="2.7"/><circle cx="458.5" cy="543.5" r="2.7"/><circle cx="501.5" cy="543.5" r="2.7"/><circle cx="511.5" cy="543.5" r="2.7"/><circle cx="458.5" cy="627.5" r="2.7"/><circle cx="110.5" cy="532.5" r="2.7"/><circle cx="110.5" cy="543.5" r="2.7"/><circle cx="110.5" cy="553.5" r="2.7"/><circle cx="110.5" cy="691.5" r="2.7"/><circle cx="110.5" cy="701.5" r="2.7"/><circle cx="110.5" cy="712.5" r="2.7"/><circle cx="110.5" cy="722.5" r="2.7"/><circle cx="110.5" cy="733.5" r="2.7"/><circle cx="110.5" cy="743.5" r="2.7"/><circle cx="1061.5" cy="67.5" r="2.7"/><circle cx="1061.5" cy="152.5" r="2.7"/><circle cx="1061.5" cy="278.5" r="2.7"/><circle cx="765.5" cy="152.5" r="2.7"/><circle cx="881.5" cy="226.5" r="2.7"/><circle cx="987.5" cy="278.5" r="2.7"/><circle cx="670.5" cy="278.5" r="2.7"/><circle cx="723.5" cy="278.5" r="2.7"/><circle cx="723.5" cy="289.5" r="2.7"/><circle cx="1019.5" cy="278.5" r="2.7"/><circle cx="923.5" cy="278.5" r="2.7"/><circle cx="923.5" cy="289.5" r="2.7"/><circle cx="606.5" cy="500.5" r="2.7"/><circle cx="659.5" cy="500.5" r="2.7"/><circle cx="659.5" cy="532.5" r="2.7"/><circle cx="839.5" cy="500.5" r="2.7"/><circle cx="892.5" cy="500.5" r="2.7"/><circle cx="839.5" cy="543.5" r="2.7"/><circle cx="786.5" cy="532.5" r="2.7"/></g>
<g fill="none" stroke="#DCE6F5" stroke-width="1.2"><path d="M182 212l6 6M188 212l-6 6"/><path d="M308 170l6 6M314 170l-6 6"/><path d="M308 212l6 6M314 212l-6 6"/><path d="M446 603l6 6M452 603l-6 6"/><path d="M108 582l6 6M114 582l-6 6"/><path d="M108 592l6 6M114 592l-6 6"/><path d="M108 645l6 6M114 645l-6 6"/><path d="M108 656l6 6M114 656l-6 6"/><path d="M890 127l6 6M896 127l-6 6"/><path d="M1133 170l6 6M1139 170l-6 6"/><path d="M1133 180l6 6M1139 180l-6 6"/><path d="M1017 466l6 6M1023 466l-6 6"/><path d="M1122 466l6 6M1128 466l-6 6"/><path d="M1017 476l6 6M1023 476l-6 6"/><path d="M1122 476l6 6M1128 476l-6 6"/><path d="M1017 487l6 6M1023 487l-6 6"/><path d="M1122 487l6 6M1128 487l-6 6"/><path d="M1017 497l6 6M1023 497l-6 6"/><path d="M1122 497l6 6M1128 497l-6 6"/><path d="M1017 518l6 6M1023 518l-6 6"/><path d="M1122 518l6 6M1128 518l-6 6"/><path d="M1017 529l6 6M1023 529l-6 6"/><path d="M1122 529l6 6M1128 529l-6 6"/><path d="M1017 540l6 6M1023 540l-6 6"/><path d="M1122 540l6 6M1128 540l-6 6"/><path d="M1017 550l6 6M1023 550l-6 6"/><path d="M1122 550l6 6M1128 550l-6 6"/><path d="M1017 561l6 6M1023 561l-6 6"/><path d="M1122 561l6 6M1128 561l-6 6"/><path d="M1017 592l6 6M1023 592l-6 6"/><path d="M1122 592l6 6M1128 592l-6 6"/><path d="M1017 614l6 6M1023 614l-6 6"/><path d="M1122 614l6 6M1128 614l-6 6"/><path d="M1017 635l6 6M1023 635l-6 6"/><path d="M1122 635l6 6M1128 635l-6 6"/></g>
<g fill="#000000" stroke="#000000"><text x="97.1" y="79.5" transform="rotate(-90 97.1 79.5)">1</text><text x="97.1" y="129" text-anchor="end" transform="rotate(-90 97.1 129)">2</text><text x="139.1" y="79.5" transform="rotate(-90 139.1 79.5)">1</text><text x="139.1" y="129" text-anchor="end" transform="rotate(-90 139.1 129)">2</text><text x="197.2" y="149.7" text-anchor="end">1</text><text x="212.8" y="154.7">SDA</text><text x="197.2" y="170.7" text-anchor="end">2</text><text x="214.8" y="175.7">SCL</text><text x="197.2" y="191.7" text-anchor="end">3</text><text x="212.8" y="197.7">VSS</text><text x="197.2" y="212.7" text-anchor="end">4</text><text x="212.8" y="218.7">NC</text><text x="197.2" y="234.7" text-anchor="end">5</text><text x="212.8" y="239.7">VDD</text><text x="197.2" y="255.7" text-anchor="end">6</text><text x="212.8" y="260.7">BAT</text><text x="298.5" y="149.7">12</text><text x="282.9" y="154.7" text-anchor="end">GPOUT</text><text x="298.5" y="170.7">11</text><text x="282.9" y="175.7" text-anchor="end">NC</text><text x="298.5" y="191.7">10</text><text x="282.9" y="197.7" text-anchor="end">BIN</text><text x="298.5" y="212.7">9</text><text x="282.9" y="218.7" text-anchor="end">NC</text><text x="298.5" y="234.7">8</text><text x="282.9" y="239.7" text-anchor="end">SRP</text><text x="298.5" y="255.7">7</text><text x="282.9" y="260.7" text-anchor="end">SRN</text><text x="245.6" y="276.5" text-anchor="end" transform="rotate(-90 245.6 276.5)">13</text><text x="250.7" y="261" transform="rotate(-90 250.7 261)">EP</text><text x="118.8" y="236.2" transform="rotate(-90 118.8 236.2)">1</text><text x="118.8" y="259.3" text-anchor="end" transform="rotate(-90 118.8 259.3)">2</text><text x="325.2" y="318.8" text-anchor="end">1</text><text x="371.9" y="318.8">2</text><text x="182.8" y="331.2" transform="rotate(-90 182.8 331.2)">1</text><text x="182.8" y="354.3" text-anchor="end" transform="rotate(-90 182.8 354.3)">2</text><text x="330.1" y="407.5" transform="rotate(-90 330.1 407.5)">1</text><text x="330.1" y="446" text-anchor="end" transform="rotate(-90 330.1 446)">2</text><text x="324.2" y="508.7" text-anchor="end">13</text><text x="339.8" y="514.7">IN</text><text x="324.2" y="540.7" text-anchor="end">8</text><text x="339.8" y="545.7">VSS</text><text x="324.2" y="561.7" text-anchor="end">1</text><text x="339.8" y="566.7">TS</text><text x="324.2" y="582.7" text-anchor="end">2</text><text x="339.8" y="588.7">BAT</text><text x="324.2" y="604.7" text-anchor="end">3</text><text x="339.8" y="609.7">BAT</text><text x="324.2" y="625.7" text-anchor="end">15</text><text x="339.8" y="630.7">TD</text><text x="425.5" y="519.7">10</text><text x="409.9" y="524.7" text-anchor="end">OUT</text><text x="425.5" y="540.7">11</text><text x="409.9" y="545.7" text-anchor="end">OUT</text><text x="425.5" y="561.7">5</text><text x="409.9" y="566.7" text-anchor="end">EN2</text><text x="425.5" y="582.7">6</text><text x="409.9" y="588.7" text-anchor="end">EN1</text><text x="425.5" y="604.7">14</text><text x="409.9" y="609.7" text-anchor="end">TMR</text><text x="425.5" y="625.7">4</text><text x="409.9" y="630.7" text-anchor="end">CE</text><text x="361.6" y="492" transform="rotate(-90 361.6 492)">7</text><text x="366.7" y="508" text-anchor="end" transform="rotate(-90 366.7 508)">PGOOD</text><text x="382.6" y="492" transform="rotate(-90 382.6 492)">9</text><text x="387.7" y="508" text-anchor="end" transform="rotate(-90 387.7 508)">CHG</text><text x="351.6" y="667.5" text-anchor="end" transform="rotate(-90 351.6 667.5)">17</text><text x="356.7" y="652" transform="rotate(-90 356.7 652)">EP</text><text x="372.6" y="667.5" text-anchor="end" transform="rotate(-90 372.6 667.5)">12</text><text x="377.7" y="652" transform="rotate(-90 377.7 652)">ILIM</text><text x="393.6" y="667.5" text-anchor="end" transform="rotate(-90 393.6 667.5)">16</text><text x="398.7" y="652" transform="rotate(-90 398.7 652)">ISET</text><text x="277.8" y="521.2" transform="rotate(-90 277.8 521.2)">1</text><text x="277.8" y="544.3" text-anchor="end" transform="rotate(-90 277.8 544.3)">2</text><text x="256.8" y="616.2" transform="rotate(-90 256.8 616.2)">1</text><text x="256.8" y="639.3" text-anchor="end" transform="rotate(-90 256.8 639.3)">2</text><text x="456.8" y="510.2" transform="rotate(-90 456.8 510.2)">1</text><text x="456.8" y="534.3" text-anchor="end" transform="rotate(-90 456.8 534.3)">2</text><text x="372.1" y="692.5" transform="rotate(-90 372.1 692.5)">2</text><text x="372.1" y="742" text-anchor="end" transform="rotate(-90 372.1 742)">1</text><text x="404.1" y="692.5" transform="rotate(-90 404.1 692.5)">2</text><text x="404.1" y="742" text-anchor="end" transform="rotate(-90 404.1 742)">1</text><text x="81.9" y="535.7" text-anchor="end">VBUS</text><text x="81.9" y="545.7" text-anchor="end">VBUS</text><text x="81.9" y="556.7" text-anchor="end">VBUS</text><text x="81.9" y="566.7" text-anchor="end">VBUS</text><text x="81.9" y="588.7" text-anchor="end">CC1</text><text x="81.9" y="598.7" text-anchor="end">CC2</text><text x="81.9" y="609.7" text-anchor="end">DP1</text><text x="81.9" y="619.7" text-anchor="end">DP2</text><text x="81.9" y="630.7" text-anchor="end">DN1</text><text x="81.9" y="640.7" text-anchor="end">DN2</text><text x="81.9" y="651.7" text-anchor="end">SBU1</text><text x="81.9" y="662.7" text-anchor="end">SBU2</text><text x="81.9" y="683.7" text-anchor="end">SHELL</text><text x="81.9" y="693.7" text-anchor="end">SHELL</text><text x="81.9" y="704.7" text-anchor="end">SHELL</text><text x="81.9" y="714.7" text-anchor="end">SHELL</text><text x="81.9" y="725.7" text-anchor="end">GND</text><text x="81.9" y="736.7" text-anchor="end">GND</text><text x="81.9" y="746.7" text-anchor="end">GND</text><text x="81.9" y="757.7" text-anchor="end">GND</text><text x="1059.8" y="193.2" transform="rotate(-90 1059.8 193.2)">2</text><text x="1059.8" y="217.3" text-anchor="end" transform="rotate(-90 1059.8 217.3)">1</text><text x="905.2" y="128.7" text-anchor="end">1</text><text x="920.8" y="133.7">NC</text><text x="905.2" y="149.7" text-anchor="end">2</text><text x="920.8" y="154.7">COUT</text><text x="905.2" y="170.7" text-anchor="end">3</text><text x="920.8" y="175.7">DOUT</text><text x="1006.5" y="128.7">6</text><text x="990.9" y="133.7" text-anchor="end">V-</text><text x="1006.5" y="149.7">5</text><text x="990.9" y="154.7" text-anchor="end">BAT</text><text x="1006.5" y="170.7">4</text><text x="990.9" y="175.7" text-anchor="end">VSS</text><text x="733.5" y="276.9" text-anchor="middle">1</text><text x="733.5" y="287.9" text-anchor="middle">2</text><text x="733.5" y="298.9" text-anchor="middle">3</text><text x="762.9" y="249" transform="rotate(-90 762.9 249)">4</text><text x="913.5" y="276.9" text-anchor="middle">1</text><text x="913.5" y="287.9" text-anchor="middle">2</text><text x="913.5" y="298.9" text-anchor="middle">3</text><text x="878.9" y="249" transform="rotate(-90 878.9 249)">4</text><text x="784.7" y="276.6">5-6-7-8</text><text x="834.8" y="276.6">5-6-7-8</text><text x="1148.5" y="149.9" text-anchor="end">1</text><text x="1148.5" y="159.9" text-anchor="end">2</text><text x="1148.5" y="170.9" text-anchor="end">MP1</text><text x="1148.5" y="180.9" text-anchor="end">MP2</text><text x="672.2" y="477.7" text-anchor="end">3</text><text x="687.8" y="482.7">LX1</text><text x="672.2" y="498.7" text-anchor="end">4</text><text x="687.8" y="503.7">VIN</text><text x="672.2" y="530.7" text-anchor="end">6</text><text x="687.8" y="535.7">MODE</text><text x="672.2" y="551.7" text-anchor="end">5</text><text x="687.8" y="556.7">EN</text><text x="774.5" y="477.7">2</text><text x="758.9" y="482.7" text-anchor="end">LX2</text><text x="774.5" y="498.7">1</text><text x="758.9" y="503.7" text-anchor="end">VOUT</text><text x="774.5" y="530.7">8</text><text x="758.9" y="535.7" text-anchor="end">FB</text><text x="774.5" y="551.7">7</text><text x="758.9" y="556.7" text-anchor="end">GND</text><text x="695.9" y="434.7">1</text><text x="747.9" y="434.7">2</text><text x="604.8" y="521.2" transform="rotate(-90 604.8 521.2)">1</text><text x="604.8" y="544.3" text-anchor="end" transform="rotate(-90 604.8 544.3)">2</text><text x="890.8" y="531.2" transform="rotate(-90 890.8 531.2)">1</text><text x="890.8" y="555.3" text-anchor="end" transform="rotate(-90 890.8 555.3)">2</text><text x="1032.2" y="456.7" text-anchor="end" letter-spacing="-0.55">A01</text><text x="1047.8" y="461.7">A01</text><text x="1032.2" y="466.7" text-anchor="end" letter-spacing="-0.55">A02</text><text x="1047.8" y="471.7">A02</text><text x="1032.2" y="477.7" text-anchor="end" letter-spacing="-0.55">A03</text><text x="1047.8" y="482.7">A03</text><text x="1032.2" y="487.7" text-anchor="end" letter-spacing="-0.55">A04</text><text x="1047.8" y="492.7">A04</text><text x="1032.2" y="498.7" text-anchor="end" letter-spacing="-0.55">A05</text><text x="1047.8" y="503.7">A05</text><text x="1032.2" y="508.7" text-anchor="end" letter-spacing="-0.55">A06</text><text x="1047.8" y="514.7">A06</text><text x="1032.2" y="519.7" text-anchor="end" letter-spacing="-0.55">A07</text><text x="1047.8" y="524.7">A07</text><text x="1032.2" y="530.7" text-anchor="end" letter-spacing="-0.55">A08</text><text x="1047.8" y="535.7">A08</text><text x="1032.2" y="540.7" text-anchor="end" letter-spacing="-0.55">A09</text><text x="1047.8" y="545.7">A09</text><text x="1032.2" y="551.7" text-anchor="end" letter-spacing="-0.55">A10</text><text x="1047.8" y="556.7">A10</text><text x="1032.2" y="561.7" text-anchor="end" letter-spacing="-0.55">A11</text><text x="1047.8" y="566.7">A11</text><text x="1032.2" y="582.7" text-anchor="end" letter-spacing="-0.55">A12</text><text x="1047.8" y="588.7">A12</text><text x="1032.2" y="593.7" text-anchor="end" letter-spacing="-0.55">A13</text><text x="1047.8" y="598.7">A13</text><text x="1032.2" y="604.7" text-anchor="end" letter-spacing="-0.55">A14</text><text x="1047.8" y="609.7">A14</text><text x="1032.2" y="614.7" text-anchor="end" letter-spacing="-0.55">A15</text><text x="1047.8" y="619.7">A15</text><text x="1032.2" y="625.7" text-anchor="end" letter-spacing="-0.55">A16</text><text x="1047.8" y="630.7">A16</text><text x="1032.2" y="635.7" text-anchor="end" letter-spacing="-0.55">A17</text><text x="1047.8" y="640.7">A17</text><text x="1032.2" y="646.7" text-anchor="end" letter-spacing="-0.55">A18</text><text x="1047.8" y="651.7">A18</text><text x="1112.5" y="456.7" letter-spacing="-0.55">B01</text><text x="1096.9" y="461.7" text-anchor="end">B01</text><text x="1112.5" y="466.7" letter-spacing="-0.55">B02</text><text x="1096.9" y="471.7" text-anchor="end">B02</text><text x="1112.5" y="477.7" letter-spacing="-0.55">B03</text><text x="1096.9" y="482.7" text-anchor="end">B03</text><text x="1112.5" y="487.7" letter-spacing="-0.55">B04</text><text x="1096.9" y="492.7" text-anchor="end">B04</text><text x="1112.5" y="498.7" letter-spacing="-0.55">B05</text><text x="1096.9" y="503.7" text-anchor="end">B05</text><text x="1112.5" y="508.7" letter-spacing="-0.55">B06</text><text x="1096.9" y="514.7" text-anchor="end">B06</text><text x="1112.5" y="519.7" letter-spacing="-0.55">B07</text><text x="1096.9" y="524.7" text-anchor="end">B07</text><text x="1112.5" y="530.7" letter-spacing="-0.55">B08</text><text x="1096.9" y="535.7" text-anchor="end">B08</text><text x="1112.5" y="540.7" letter-spacing="-0.55">B09</text><text x="1096.9" y="545.7" text-anchor="end">B09</text><text x="1112.5" y="551.7" letter-spacing="-0.55">B10</text><text x="1096.9" y="556.7" text-anchor="end">B10</text><text x="1112.5" y="561.7" letter-spacing="-0.55">B11</text><text x="1096.9" y="566.7" text-anchor="end">B11</text><text x="1112.5" y="582.7" letter-spacing="-0.55">B12</text><text x="1096.9" y="588.7" text-anchor="end">B12</text><text x="1112.5" y="593.7" letter-spacing="-0.55">B13</text><text x="1096.9" y="598.7" text-anchor="end">B13</text><text x="1112.5" y="604.7" letter-spacing="-0.55">B14</text><text x="1096.9" y="609.7" text-anchor="end">B14</text><text x="1112.5" y="614.7" letter-spacing="-0.55">B15</text><text x="1096.9" y="619.7" text-anchor="end">B15</text><text x="1112.5" y="625.7" letter-spacing="-0.55">B16</text><text x="1096.9" y="630.7" text-anchor="end">B16</text><text x="1112.5" y="635.7" letter-spacing="-0.55">B17</text><text x="1096.9" y="640.7" text-anchor="end">B17</text><text x="1112.5" y="646.7" letter-spacing="-0.55">B18</text><text x="1096.9" y="651.7" text-anchor="end">B18</text><text x="164.9" y="28" text-anchor="middle">1</text><text x="164.9" y="811" text-anchor="middle">1</text><text x="468.8" y="28" text-anchor="middle">2</text><text x="468.8" y="811" text-anchor="middle">2</text><text x="772.8" y="28" text-anchor="middle">3</text><text x="772.8" y="811" text-anchor="middle">3</text><text x="1076.8" y="28" text-anchor="middle">4</text><text x="1076.8" y="811" text-anchor="middle">4</text><text x="25.6" y="117.8" text-anchor="middle">A</text><text x="1220.3" y="117.8" text-anchor="middle">A</text><text x="25.6" y="318.8" text-anchor="middle">B</text><text x="1220.3" y="318.8" text-anchor="middle">B</text><text x="25.6" y="519.85" text-anchor="middle">C</text><text x="1220.3" y="519.85" text-anchor="middle">C</text><text x="25.6" y="720.9" text-anchor="middle">D</text><text x="1220.3" y="720.9" text-anchor="middle">D</text><text x="844.7" y="720.5">Title</text><text x="844.7" y="752">Size</text><text x="850" y="767.5">A4</text><text x="897" y="752">Number</text><text x="1108.7" y="752">Revision</text><text x="844.7" y="783.9">Date:</text><text x="892.6" y="783.9">12-02-2024</text><text x="1056.3" y="783.9">Sheet</text><text x="1084.5" y="783.9">of</text><text x="844.7" y="794.9">File:</text><text x="892.6" y="794.9">C:\Users\..\1power.SchDoc</text><text x="1056.3" y="794.9">Drawn By:</text></g>
<g fill="#000080" stroke="#000080"><text x="105.9" y="92.7">R12</text><text x="105.9" y="103.7">5.1K</text><text x="147.9" y="92.7">R13</text><text x="147.9" y="103.7">5.1K</text><text x="205" y="138.8">U4</text><text x="250.1" y="203" text-anchor="middle" transform="rotate(-90 250.1 203)">Fuel Guage</text><text x="132.3" y="247.7">C4</text><text x="132.3" y="258.7">0.47uF</text><text x="327.7" y="313.2">R11</text><text x="310.8" y="340.3">0.01Ohm 1W 1206 1%</text><text x="196.3" y="342.7">C5</text><text x="196.3" y="353.7">1uF</text><text x="341.2" y="146.7">R15</text><text x="342.2" y="163.7">10K</text><text x="341.2" y="188.7">R14</text><text x="342.2" y="205.7">10K</text><text x="311" y="118">Connect GPOUT to MCU later</text><text x="335.3" y="370.7">R7</text><text x="335.3" y="380.7">1.5k</text><text x="419.3" y="370.7">R5</text><text x="419.3" y="380.7">1.5k</text><text x="356.5" y="420.6">D2</text><text x="356.5" y="430.8">White LED</text><text x="440.1" y="422.8">D1</text><text x="440.1" y="432.6">Red LED</text><text x="368.6" y="624.2">U2</text><text x="378.1" y="582.4" text-anchor="middle" transform="rotate(-90 378.1 582.4)">Charger/Switch</text><text x="291.3" y="532.7">C7</text><text x="291.3" y="543.7">1uF</text><text x="267.2" y="569.7">R6</text><text x="268.2" y="586.7">10K</text><text x="270.3" y="628.7">C8</text><text x="270.3" y="638.7">4.7uF</text><text x="470.3" y="522.7">C6</text><text x="470.3" y="532.7">4.7uF</text><text x="380.9" y="705.7">R16</text><text x="380.9" y="716.7">3K</text><text x="412.9" y="705.7">R8</text><text x="412.9" y="716.7">1.8K</text><text x="47" y="519.5">J1</text><text x="52" y="774.5">USB-C</text><text x="1064.3" y="85.7">R1</text><text x="1064.3" y="95.7">3.3K</text><text x="1073.3" y="205.7">C1</text><text x="1073.3" y="215.7">0.1uF</text><text x="913" y="118.2">U1</text><text x="931" y="193.8">Protection Ic</text><text x="933.2" y="220.7">R4</text><text x="934.2" y="237.7">1M</text><text x="673.3" y="190.7">R3</text><text x="673.3" y="201.7">2.2K</text><text x="726.3" y="201.7">R2</text><text x="726.3" y="211.7">1M</text><text x="743.6" y="311.6">Q1</text><text x="743.6" y="321.6">Protection IC FET</text><text x="870" y="311.6">Q2</text><text x="870" y="321.6">Protection IC FET</text><text x="1155.5" y="137.7">P1</text><text x="1155.7" y="203.3">JST</text><text x="680" y="467.2">U5</text><text x="702" y="571.8">Buck-Boost</text><text x="704.1" y="429.7">L2</text><text x="717" y="448.7">1uH</text><text x="618.3" y="532.7">C9</text><text x="618.3" y="543.7">22uF</text><text x="842.3" y="518.7">R17</text><text x="842.3" y="528.7">511K</text><text x="842.3" y="581.7">R18</text><text x="842.3" y="592.7">91k</text><text x="904.3" y="543.7">C10</text><text x="904.3" y="554.7">47uF</text><text x="1040.8" y="446">J2</text><text x="1061.7" y="667.5">PCIE</text><text x="891.9" y="730.8">Power Circuitry 0.0.2</text></g>
<g fill="#800000" stroke="#800000"><text x="121" y="54.85" text-anchor="middle">3.3V</text><text x="46.8" y="150.5">SDA</text><text x="46.8" y="171.5">SCL</text><text x="248.3" y="318.9" text-anchor="middle">PGND</text><text x="79.3" y="223.9" text-anchor="middle">PGND</text><text x="121.3" y="286.9" text-anchor="middle">PGND</text><text x="128.7" y="324.3" text-anchor="end">PACKP</text><text x="440.5" y="324.3">VBAT</text><text x="129.2" y="355.7" text-anchor="end">PGND</text><text x="407" y="138.85" text-anchor="middle">3.3V</text><text x="407.3" y="223.9" text-anchor="middle">PGND</text><text x="332.8" y="477.5">PGOOD</text><text x="384.8" y="477.5">CHG</text><text x="248" y="498.85" text-anchor="middle">VUSB</text><text x="214.2" y="556.7" text-anchor="end">PGND</text><text x="235.2" y="577.7" text-anchor="end">PGND</text><text x="227" y="593.85" text-anchor="middle">VBAT</text><text x="259.3" y="677.9" text-anchor="middle">PGND</text><text x="311.3" y="656.9" text-anchor="middle">PGND</text><text x="533" y="529.85" text-anchor="middle">VPRE</text><text x="459.3" y="477.9" text-anchor="middle">PGND</text><text x="459.3" y="656.9" text-anchor="middle">PGND</text><text x="343.3" y="709.9" text-anchor="middle">PGND</text><text x="375.3" y="783.9" text-anchor="middle">PGND</text><text x="407.3" y="783.9" text-anchor="middle">PGND</text><text x="174" y="519.85" text-anchor="middle">VUSB</text><text x="131.1" y="609.8">DP</text><text x="131.1" y="620.8">DP</text><text x="131.1" y="630.8">DN</text><text x="131.1" y="641.8">DN</text><text x="163.3" y="751.9" text-anchor="middle">PGND</text><text x="626.7" y="54.85" text-anchor="middle">PACKP</text><text x="639.3" y="308.9" text-anchor="middle">PGND</text><text x="597" y="487.85" text-anchor="middle">VPRE</text><text x="607.3" y="593.9" text-anchor="middle">PGND</text><text x="903" y="487.85" text-anchor="middle">3.3V</text><text x="840.3" y="635.9" text-anchor="middle">PGND</text><text x="787.3" y="614.9" text-anchor="middle">PGND</text><text x="893.3" y="593.9" text-anchor="middle">PGND</text><text x="998" y="445.85" text-anchor="middle">3.3V</text><text x="1146" y="445.85" text-anchor="middle">3.3V</text><text x="998.3" y="540.9" text-anchor="middle">PGND</text><text x="1146.3" y="540.9" text-anchor="middle">PGND</text><text x="981.8" y="588.8" text-anchor="middle">DP</text><text x="981.3" y="609.8" text-anchor="middle">DN</text><text x="1167.3" y="588.8" text-anchor="middle">DP</text><text x="1167.8" y="609.8" text-anchor="middle">DN</text><text x="987.8" y="625.5">SCL</text><text x="987.8" y="646.5">SDA</text><text x="1145.8" y="625.5">SCL</text><text x="1145.8" y="646.5">SDA</text></g>
<g fill="#FF0000" shape-rendering="crispEdges"><path d="M184 214h2v2h-2zM181 211h1v1h-1zM188 211h1v1h-1zM181 218h1v1h-1zM180 219h1v1h-1zM188 218h1v1h-1zM189 219h1v1h-1z"/><path d="M310 172h2v2h-2zM307 169h1v1h-1zM314 169h1v1h-1zM307 176h1v1h-1zM306 177h1v1h-1zM314 176h1v1h-1zM315 177h1v1h-1z"/><path d="M310 214h2v2h-2zM307 211h1v1h-1zM314 211h1v1h-1zM307 218h1v1h-1zM306 219h1v1h-1zM314 218h1v1h-1zM315 219h1v1h-1z"/><path d="M448 605h2v2h-2zM445 602h1v1h-1zM452 602h1v1h-1zM445 609h1v1h-1zM444 610h1v1h-1zM452 609h1v1h-1zM453 610h1v1h-1z"/><path d="M110 584h2v2h-2zM107 581h1v1h-1zM114 581h1v1h-1zM107 588h1v1h-1zM106 589h1v1h-1zM114 588h1v1h-1zM115 589h1v1h-1z"/><path d="M110 594h2v2h-2zM107 591h1v1h-1zM114 591h1v1h-1zM107 598h1v1h-1zM106 599h1v1h-1zM114 598h1v1h-1zM115 599h1v1h-1z"/><path d="M110 647h2v2h-2zM107 644h1v1h-1zM114 644h1v1h-1zM107 651h1v1h-1zM106 652h1v1h-1zM114 651h1v1h-1zM115 652h1v1h-1z"/><path d="M110 658h2v2h-2zM107 655h1v1h-1zM114 655h1v1h-1zM107 662h1v1h-1zM106 663h1v1h-1zM114 662h1v1h-1zM115 663h1v1h-1z"/><path d="M892 129h2v2h-2zM889 126h1v1h-1zM896 126h1v1h-1zM889 133h1v1h-1zM888 134h1v1h-1zM896 133h1v1h-1zM897 134h1v1h-1z"/><path d="M1135 172h2v2h-2zM1132 169h1v1h-1zM1139 169h1v1h-1zM1132 176h1v1h-1zM1131 177h1v1h-1zM1139 176h1v1h-1zM1140 177h1v1h-1z"/><path d="M1135 182h2v2h-2zM1132 179h1v1h-1zM1139 179h1v1h-1zM1132 186h1v1h-1zM1131 187h1v1h-1zM1139 186h1v1h-1zM1140 187h1v1h-1z"/><path d="M1019 468h2v2h-2zM1016 465h1v1h-1zM1023 465h1v1h-1zM1016 472h1v1h-1zM1015 473h1v1h-1zM1023 472h1v1h-1zM1024 473h1v1h-1z"/><path d="M1124 468h2v2h-2zM1121 465h1v1h-1zM1128 465h1v1h-1zM1121 472h1v1h-1zM1120 473h1v1h-1zM1128 472h1v1h-1zM1129 473h1v1h-1z"/><path d="M1019 478h2v2h-2zM1016 475h1v1h-1zM1023 475h1v1h-1zM1016 482h1v1h-1zM1015 483h1v1h-1zM1023 482h1v1h-1zM1024 483h1v1h-1z"/><path d="M1124 478h2v2h-2zM1121 475h1v1h-1zM1128 475h1v1h-1zM1121 482h1v1h-1zM1120 483h1v1h-1zM1128 482h1v1h-1zM1129 483h1v1h-1z"/><path d="M1019 489h2v2h-2zM1016 486h1v1h-1zM1023 486h1v1h-1zM1016 493h1v1h-1zM1015 494h1v1h-1zM1023 493h1v1h-1zM1024 494h1v1h-1z"/><path d="M1124 489h2v2h-2zM1121 486h1v1h-1zM1128 486h1v1h-1zM1121 493h1v1h-1zM1120 494h1v1h-1zM1128 493h1v1h-1zM1129 494h1v1h-1z"/><path d="M1019 499h2v2h-2zM1016 496h1v1h-1zM1023 496h1v1h-1zM1016 503h1v1h-1zM1015 504h1v1h-1zM1023 503h1v1h-1zM1024 504h1v1h-1z"/><path d="M1124 499h2v2h-2zM1121 496h1v1h-1zM1128 496h1v1h-1zM1121 503h1v1h-1zM1120 504h1v1h-1zM1128 503h1v1h-1zM1129 504h1v1h-1z"/><path d="M1019 520h2v2h-2zM1016 517h1v1h-1zM1023 517h1v1h-1zM1016 524h1v1h-1zM1015 525h1v1h-1zM1023 524h1v1h-1zM1024 525h1v1h-1z"/><path d="M1124 520h2v2h-2zM1121 517h1v1h-1zM1128 517h1v1h-1zM1121 524h1v1h-1zM1120 525h1v1h-1zM1128 524h1v1h-1zM1129 525h1v1h-1z"/><path d="M1019 531h2v2h-2zM1016 528h1v1h-1zM1023 528h1v1h-1zM1016 535h1v1h-1zM1015 536h1v1h-1zM1023 535h1v1h-1zM1024 536h1v1h-1z"/><path d="M1124 531h2v2h-2zM1121 528h1v1h-1zM1128 528h1v1h-1zM1121 535h1v1h-1zM1120 536h1v1h-1zM1128 535h1v1h-1zM1129 536h1v1h-1z"/><path d="M1019 542h2v2h-2zM1016 539h1v1h-1zM1023 539h1v1h-1zM1016 546h1v1h-1zM1015 547h1v1h-1zM1023 546h1v1h-1zM1024 547h1v1h-1z"/><path d="M1124 542h2v2h-2zM1121 539h1v1h-1zM1128 539h1v1h-1zM1121 546h1v1h-1zM1120 547h1v1h-1zM1128 546h1v1h-1zM1129 547h1v1h-1z"/><path d="M1019 552h2v2h-2zM1016 549h1v1h-1zM1023 549h1v1h-1zM1016 556h1v1h-1zM1015 557h1v1h-1zM1023 556h1v1h-1zM1024 557h1v1h-1z"/><path d="M1124 552h2v2h-2zM1121 549h1v1h-1zM1128 549h1v1h-1zM1121 556h1v1h-1zM1120 557h1v1h-1zM1128 556h1v1h-1zM1129 557h1v1h-1z"/><path d="M1019 563h2v2h-2zM1016 560h1v1h-1zM1023 560h1v1h-1zM1016 567h1v1h-1zM1015 568h1v1h-1zM1023 567h1v1h-1zM1024 568h1v1h-1z"/><path d="M1124 563h2v2h-2zM1121 560h1v1h-1zM1128 560h1v1h-1zM1121 567h1v1h-1zM1120 568h1v1h-1zM1128 567h1v1h-1zM1129 568h1v1h-1z"/><path d="M1019 594h2v2h-2zM1016 591h1v1h-1zM1023 591h1v1h-1zM1016 598h1v1h-1zM1015 599h1v1h-1zM1023 598h1v1h-1zM1024 599h1v1h-1z"/><path d="M1124 594h2v2h-2zM1121 591h1v1h-1zM1128 591h1v1h-1zM1121 598h1v1h-1zM1120 599h1v1h-1zM1128 598h1v1h-1zM1129 599h1v1h-1z"/><path d="M1019 616h2v2h-2zM1016 613h1v1h-1zM1023 613h1v1h-1zM1016 620h1v1h-1zM1015 621h1v1h-1zM1023 620h1v1h-1zM1024 621h1v1h-1z"/><path d="M1124 616h2v2h-2zM1121 613h1v1h-1zM1128 613h1v1h-1zM1121 620h1v1h-1zM1120 621h1v1h-1zM1128 620h1v1h-1zM1129 621h1v1h-1z"/><path d="M1019 637h2v2h-2zM1016 634h1v1h-1zM1023 634h1v1h-1zM1016 641h1v1h-1zM1015 642h1v1h-1zM1023 641h1v1h-1zM1024 642h1v1h-1z"/><path d="M1124 637h2v2h-2zM1121 634h1v1h-1zM1128 634h1v1h-1zM1121 641h1v1h-1zM1120 642h1v1h-1zM1128 641h1v1h-1zM1129 642h1v1h-1z"/></g>
</svg></body></html>
